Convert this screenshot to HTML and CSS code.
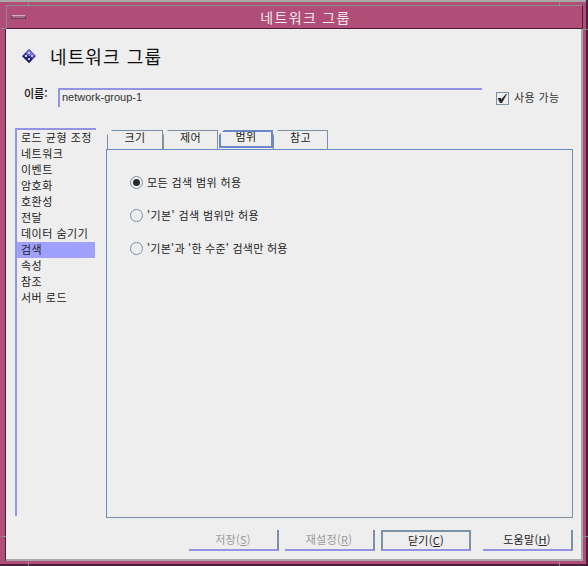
FILE: index.html
```html
<!DOCTYPE html>
<html lang="ko">
<head>
<meta charset="utf-8">
<title>네트워크 그룹</title>
<link rel="stylesheet" href="styles.css">
</head>
<body>
<div class="window">
  <i class="tick tick-tv1"></i><i class="tick tick-th1"></i><i class="tick tick-tv2"></i><i class="tick tick-th2"></i>
  <i class="tick tick-bv1"></i><i class="tick tick-bh1"></i><i class="tick tick-bv2"></i><i class="tick tick-bh2"></i>
  <div class="titlebar">
    <div class="menu-btn"><span class="menu-dash"></span></div>
    <div class="title">네트워크 그룹</div>
  </div>
  <div class="pane">
    <div class="header">
      <svg class="logo" width="14" height="14" viewBox="0 0 14 14">
        <path d="M7 0L14 7L7 14L0 7Z" fill="#3a3a9a"/>
        <path d="M7 0L14 7L7 7L3.5 3.5Z" fill="#6c6cd8"/>
        <path d="M7 14L0 7L7 7L10.5 10.5Z" fill="#24246e"/>
        <rect x="6" y="3" width="2" height="2" fill="#d8d8ff"/>
        <rect x="3" y="6" width="2" height="2" fill="#d8d8ff"/>
        <rect x="9" y="6" width="2" height="2" fill="#c0c0f0"/>
        <rect x="6" y="9" width="2" height="2" fill="#c0c0f0"/>
      </svg>
      <h1 class="heading">네트워크 그룹</h1>
    </div>
    <div class="name-row">
      <label class="name-label">이름:</label>
      <div class="name-input">network-group-1</div>
      <div class="check-box">
        <svg width="11" height="11" viewBox="0 0 11 11"><path d="M1 5H4V6.5L9 1H10L5 10H3L1 6Z" fill="#2a2a2a"/></svg>
      </div>
      <span class="check-label">사용 가능</span>
    </div>
    <div class="main">
      <ul class="nav">
        <li class="nav-item">로드 균형 조정</li>
        <li class="nav-item">네트워크</li>
        <li class="nav-item">이벤트</li>
        <li class="nav-item">암호화</li>
        <li class="nav-item">호환성</li>
        <li class="nav-item">전달</li>
        <li class="nav-item">데이터 숨기기</li>
        <li class="nav-item nav-item-active">검색</li>
        <li class="nav-item">속성</li>
        <li class="nav-item">참조</li>
        <li class="nav-item">서버 로드</li>
      </ul>
      <div class="tabset">
        <div class="tabs">
          <div class="tab tab-first">크기</div>
          <div class="tab">제어</div>
          <div class="tab tab-active">범위</div>
          <div class="tab">참고</div>
        </div>
        <div class="tab-panel">
          <div class="radio-row"><span class="radio radio-on"></span><span>모든 검색 범위 허용</span></div>
          <div class="radio-row"><span class="radio"></span><span>'기본' 검색 범위만 허용</span></div>
          <div class="radio-row"><span class="radio"></span><span class="tight">'기본'과 '한 수준' 검색만 허용</span></div>
        </div>
      </div>
    </div>
    <div class="buttons">
      <div class="btn btn-disabled">저장(<u>S</u>)</div>
      <div class="btn btn-disabled">재설정(<u>R</u>)</div>
      <div class="btn btn-default">닫기(<u>C</u>)</div>
      <div class="btn">도움말(<u>H</u>)</div>
    </div>
  </div>
</div>
</body>
</html>
```
FILE: styles.css
```css
* { box-sizing: border-box; }
html, body { margin: 0; padding: 0; }
body {
  width: 588px;
  height: 566px;
  overflow: hidden;
  font-family: "Noto Sans CJK KR", "Liberation Sans", sans-serif;
  font-size: 11px;
  color: #333;
  background: #4e1d3c;
}
.window {
  position: relative;
  width: 586px;
  height: 564px;
  border-top: 2px solid #a8a8a8;
  background: #b04e78;
  padding: 3px 3px 3px 6px;
  display: flex;
  flex-direction: column;
}
.window::before {
  content: "";
  position: absolute;
  left: 5px;
  top: 27px;
  bottom: 3px;
  width: 1px;
  background: #4e1d3c;
}
.tick { position: absolute; background: #8c8c8c; display: block; }
.tick-tv1 { left: 28px; top: 0; width: 1px; height: 27px; }
.tick-th1 { left: 1px; top: 26px; width: 28px; height: 1px; }
.tick-tv2 { left: 559px; top: 0; width: 1px; height: 4px; }
.tick-th2 { left: 583px; top: 27px; width: 5px; height: 1px; }
.tick-bv1 { left: 28px; top: 559px; width: 1px; height: 5px; }
.tick-bh1 { left: 1px; top: 534px; width: 5px; height: 1px; }
.tick-bv2 { left: 559px; top: 559px; width: 1px; height: 5px; }
.tick-bh2 { left: 583px; top: 534px; width: 5px; height: 1px; }
.titlebar {
  height: 24px;
  flex: none;
  position: relative;
  display: flex;
  align-items: center;
  justify-content: center;
  padding-left: 22px;
  background: #b04e78;
  border-top: 1px solid #8c8c8c;
  border-left: 1px solid #8c8c8c;
  border-bottom: 1px solid #4e1d3c;
  border-right: 1px solid #4e1d3c;
}
.menu-btn {
  position: absolute;
  left: 0;
  top: 0;
  width: 22px;
  height: 22px;
  display: flex;
  align-items: center;
  justify-content: center;
}
.menu-dash {
  display: block;
  width: 15px;
  height: 4px;
  background: #a86a88;
  border: 1px solid #6a4058;
  border-top-color: #d8a8c0;
}
.title {
  color: #f2e6ec;
  font-size: 14px;
  line-height: 20px;
  letter-spacing: 1.3px;
}
.pane {
  flex: 1;
  display: flex;
  flex-direction: column;
  background: #eeeeee;
  border-right: 2px solid #a8a8a8;
  border-bottom: 2px solid #a8a8a8;
  min-height: 0;
}
.header {
  height: 54px;
  flex: none;
  display: flex;
  align-items: center;
  padding-left: 16px;
}
.logo { flex: none; }
.heading {
  margin: 0 0 0 14px;
  font-size: 18px;
  font-weight: 400;
  color: #111;
  letter-spacing: 1.1px;
  line-height: 24px;
}
.name-row {
  height: 22px;
  flex: none;
  margin-top: 5px;
  display: flex;
  align-items: flex-start;
  padding-left: 18px;
}
.name-label {
  width: 34px;
  flex: none;
  font-size: 11px;
  line-height: 14px;
  margin-top: -2px;
  color: #111;
  font-weight: 500;
}
.name-input {
  width: 424px;
  height: 19px;
  flex: none;
  border-top: 2px solid #9494e4;
  border-left: 2px solid #9494e4;
  padding-left: 2px;
  font-family: "Liberation Sans", sans-serif;
  font-size: 11px;
  line-height: 14px;
  color: #333;
}
.check-box {
  width: 13px;
  height: 13px;
  flex: none;
  margin: 4px 0 0 14px;
  border: 1px solid #7c90a8;
  display: flex;
  align-items: center;
  justify-content: center;
}
.check-label {
  margin: 2px 0 0 5px;
  font-size: 11px;
  line-height: 14px;
  letter-spacing: 0.4px;
}
.main {
  flex: 1;
  display: flex;
  min-height: 0;
  margin-top: 18px;
  padding-left: 9px;
}
.nav {
  list-style: none;
  margin: 0;
  padding: 0;
  width: 81px;
  height: 388px;
  flex: none;
  border-top: 2px solid #9494e4;
  border-left: 2px solid #9494e4;
}
.nav-item {
  height: 16px;
  line-height: 15px;
  padding-left: 4px;
  width: 78px;
  font-size: 11px;
  letter-spacing: 0.5px;
  white-space: nowrap;
  color: #222;
}
.nav-item-active { background: #a0a0ff; }
.tabset {
  margin-left: 10px;
  width: 467px;
  display: flex;
  flex-direction: column;
  margin-top: 2px;
}
.tabs {
  display: flex;
  height: 19px;
  flex: none;
  padding-left: 1px;
  position: relative;
  z-index: 1;
}
.tab {
  width: 55px;
  height: 19px;
  border: 1px solid #7c90a8;
  border-bottom: none;
  text-align: center;
  line-height: 13px;
  font-size: 11px;
  letter-spacing: 0.3px;
  color: #222;
  clip-path: polygon(5px 0, 100% 0, 100% 100%, 0 100%, 0 5px);
}
.tab-first { width: 56px; }
.tab-active {
  height: 18px;
  width: 54px;
  margin-left: 1px;
  border: 2px solid #6a88c8;
  line-height: 9px;
  background: #eee;
}
.tab-panel {
  flex: 1;
  min-height: 0;
  border-top: 1px solid #6a88c8;
  border-left: 1px solid #6a88c8;
  border-right: 1px solid #7c90a8;
  border-bottom: 1px solid #7c90a8;
  padding: 24px 0 0 23px;
  display: flex;
  flex-direction: column;
  gap: 17px;
}
.radio-row {
  display: flex;
  align-items: center;
  height: 16px;
  font-size: 11px;
  letter-spacing: 0.4px;
  color: #222;
}
.tight { letter-spacing: 0.25px; }
.radio {
  width: 13px;
  height: 13px;
  flex: none;
  margin-right: 4px;
  border: 1px solid #7c90a8;
  border-radius: 50%;
  position: relative;
}
.radio-on::after {
  content: "";
  position: absolute;
  left: 2px;
  top: 2px;
  width: 7px;
  height: 7px;
  border-radius: 50%;
  background: #2a2a2a;
}
.buttons {
  height: 41px;
  flex: none;
  display: flex;
  padding: 12px 0 0 183px;
}
.btn {
  width: 90px;
  height: 21px;
  margin-right: 6px;
  border-right: 2px solid #7c90a8;
  border-bottom: 2px solid #9494e4;
  text-align: center;
  font-size: 11px;
  line-height: 19px;
  letter-spacing: 0.3px;
  color: #222;
}
.btn-disabled { color: #9a9a9a; }
.btn-default {
  margin-right: 12px;
  border: 2px solid #7c90a8;
  border-bottom-color: #9494e4;
  line-height: 17px;
}
```
